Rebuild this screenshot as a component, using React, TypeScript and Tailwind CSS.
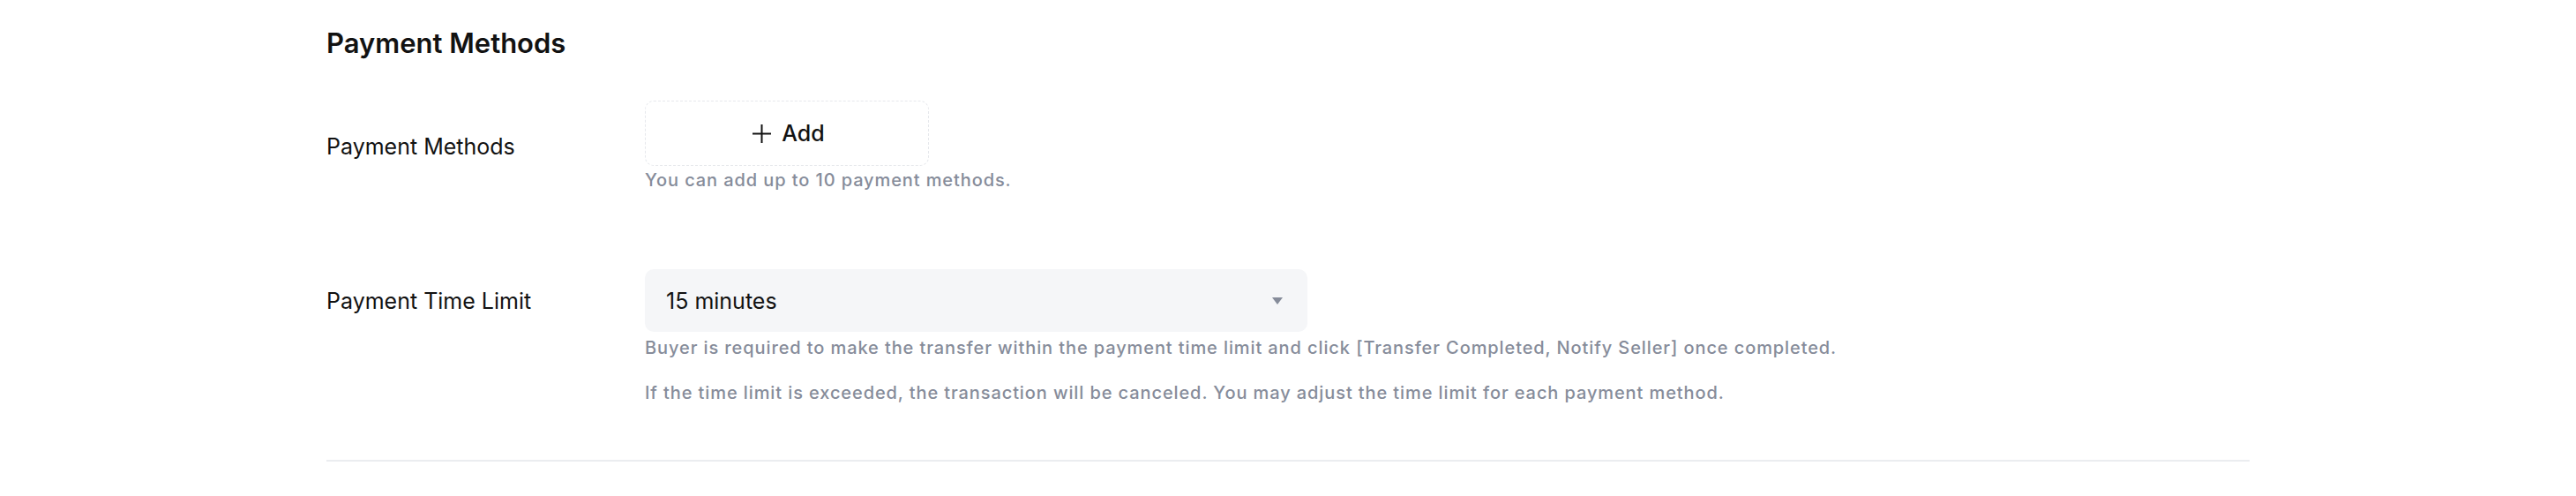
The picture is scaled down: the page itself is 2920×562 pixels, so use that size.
import React from "react";

export default function App() {
  return (
    <div className="min-h-[562px] w-full bg-white" style={{ fontFamily: "Inter, 'Noto Sans', sans-serif" }}>
      <div className="ml-[370px] w-[2180px] pt-[29px]">
        <h2 className="text-[31px] leading-[40px] font-semibold text-[#121212]">Payment Methods</h2>

        <div className="mt-[45px] flex items-start">
          <div className="w-[361px] shrink-0 pt-[36px] text-[25px] leading-[32px] text-[#121212]">Payment Methods</div>
          <div className="flex flex-col">
            <button className="flex h-[74px] w-[322px] items-center justify-center gap-[12px] rounded-[10px] border border-dashed border-[#e6e8ec] bg-white pl-[4px] text-[25px] leading-[32px] font-medium text-[#121212]">
              <svg width="21" height="21" viewBox="0 0 21 21" fill="none" stroke="#121212" strokeWidth="2">
                <line x1="10.5" y1="0" x2="10.5" y2="21" />
                <line x1="0" y1="10.5" x2="21" y2="10.5" />
              </svg>
              <span>Add</span>
            </button>
            <p className="mt-[2px] text-[20px] leading-[28px] tracking-[0.9px] font-medium text-[#868c9a] whitespace-nowrap">You can add up to 10 payment methods.</p>
          </div>
        </div>

        <div className="mt-[87px] flex items-start">
          <div className="w-[361px] shrink-0 pt-[20px] text-[25px] leading-[32px] text-[#121212]">Payment Time Limit</div>
          <div className="flex flex-col">
            <div className="flex h-[71px] w-[751px] items-center justify-between rounded-[10px] bg-[#f5f6f8] pl-[24px] pr-[28px]">
              <span className="text-[25px] leading-[32px] text-[#121212]">15 minutes</span>
              <svg width="12" height="8" viewBox="0 0 12 8">
                <path d="M0 0 H12 L6 8 Z" fill="#868c9a" />
              </svg>
            </div>
            <p className="mt-[4px] text-[20px] leading-[28px] tracking-[0.9px] font-medium text-[#868c9a] whitespace-nowrap">
              Buyer is required to make the transfer within the payment time limit and click [Transfer Completed, Notify Seller] once completed.
            </p>
            <p className="mt-[23px] text-[20px] leading-[28px] tracking-[0.9px] font-medium text-[#868c9a] whitespace-nowrap">
              If the time limit is exceeded, the transaction will be canceled. You may adjust the time limit for each payment method.
            </p>
          </div>
        </div>

        <div className="mt-[62px] h-[2px] w-full bg-[#ebedf0]" />
      </div>
    </div>
  );
}
